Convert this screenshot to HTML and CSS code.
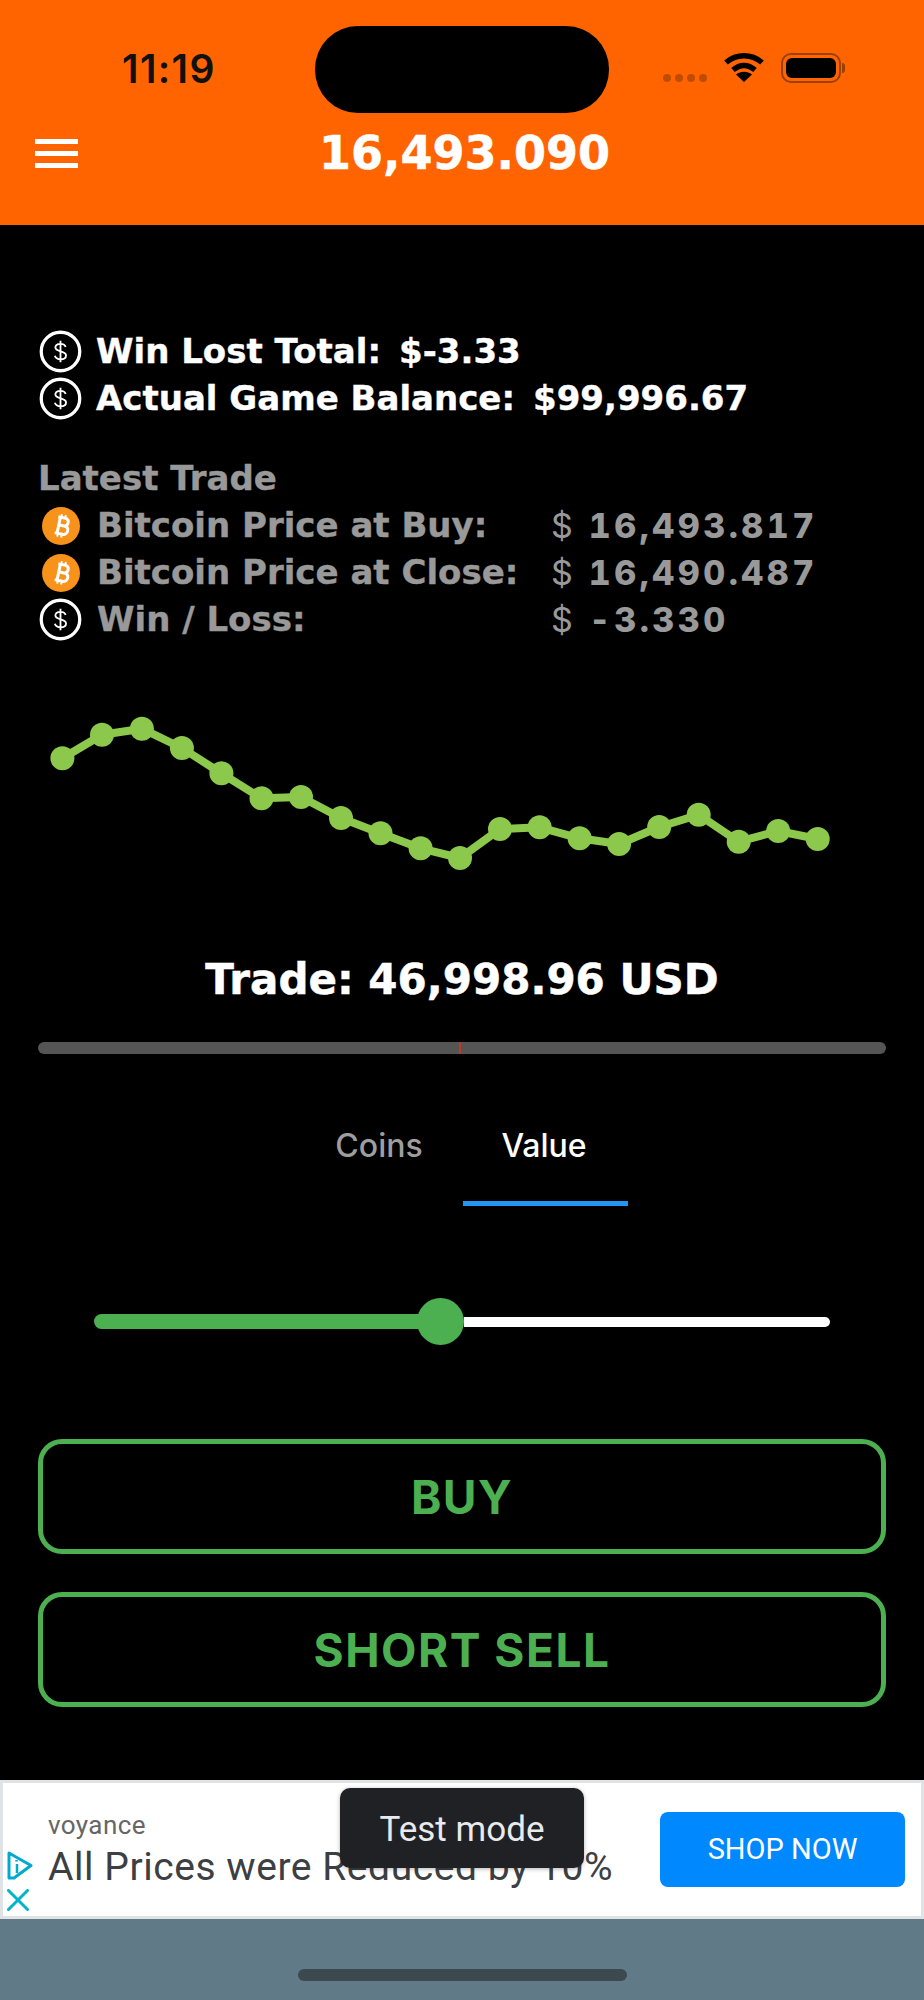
FILE: index.html
```html
<!DOCTYPE html>
<html lang="en">
<head>
<meta charset="utf-8">
<title>Trade</title>
<link rel="stylesheet" href="styles.css">
</head>
<body>
<svg class="defs" width="0" height="0" aria-hidden="true">
  <symbol id="usd" viewBox="0 0 42 42">
    <circle cx="21" cy="21" r="18.8" fill="none" stroke="#fff" stroke-width="3.200"/>
    <path d="M26 16.600c-.5-2-2.500-3.100-5-3.100-2.900 0-5 1.400-5 3.700 0 4.900 10.400 2.600 10.400 7.700 0 2.500-2.400 3.700-5.400 3.700-2.900 0-4.900-1.300-5.500-3.400M21 10.600v20.800" fill="none" stroke="#fff" stroke-width="1.800"/>
  </symbol>
  <symbol id="btc" viewBox="0 0 38 38">
    <circle cx="19" cy="19" r="19" fill="#f7931a"/>
    <g transform="rotate(12 19 19)" fill="none" stroke="#fff">
      <path d="M14.500 10.500h6.500c2.700 0 4.300 1.600 4.300 3.900 0 2.400-1.700 4-4.300 4h-5M15.800 18.400h6.200c2.900 0 4.600 1.700 4.600 4.100 0 2.500-1.800 4.300-4.700 4.300h-7.700M16.600 10.500v16.300" stroke-width="3"/>
      <path d="M17.500 7.300v3.200M21.500 7.300v3.200M17.500 26.800v3.400M21.500 26.800v3.400" stroke-width="2"/>
    </g>
  </symbol>
</svg>

<header class="app-bar">
  <div class="status">
    <span class="clock">11:19</span>
    <div class="island"></div>
    <div class="status-icons">
      <span class="signal"><i></i><i></i><i></i><i></i></span>
      <svg class="wifi" viewBox="0 0 40 30" width="40" height="30"><path d="M2 9.500C12.500.500 27.500.500 38 9.500M9 17c7-6 15-6 22 0" fill="none" stroke="#000" stroke-width="5.500"/><path d="M20 29l-8-7.500c4.700-3.600 11.300-3.600 16 0z" fill="#000"/></svg>
      <span class="battery"><span class="battery-fill"></span></span>
      <span class="battery-cap"></span>
    </div>
  </div>
  <div class="title-row">
    <button class="menu" aria-label="Menu"><i></i><i></i><i></i></button>
    <h1 class="price">16,493.090</h1>
  </div>
</header>

<main class="content">
  <section class="totals">
    <div class="row"><svg class="ic-usd"><use href="#usd"/></svg><span class="pair"><span>Win Lost Total:</span><span>$-3.33</span></span></div>
    <div class="row"><svg class="ic-usd"><use href="#usd"/></svg><span class="pair"><span>Actual Game Balance:</span><span>$99,996.67</span></span></div>
  </section>

  <section class="latest">
    <div class="latest-title">Latest Trade</div>
    <div class="row"><svg class="ic-btc"><use href="#btc"/></svg><span class="label">Bitcoin Price at Buy:</span><span class="value"><span class="cur">$</span>16,493.817</span></div>
    <div class="row"><svg class="ic-btc"><use href="#btc"/></svg><span class="label">Bitcoin Price at Close:</span><span class="value"><span class="cur">$</span>16,490.487</span></div>
    <div class="row"><svg class="ic-usd"><use href="#usd"/></svg><span class="label">Win / Loss:</span><span class="value"><span class="cur">$</span>-3.330</span></div>
  </section>

  <svg class="chart" viewBox="0 0 924 180" width="924" height="180">
    <g transform="translate(0 -700)">
      <polyline fill="none" stroke="#8cc84b" stroke-width="8" stroke-linejoin="round" points="62.400,758.300 102,734.700 141.900,728.700 181.900,748 221.400,773.300 261.500,798.300 301,797 341,818 380.500,833.300 420.600,848.300 460,858 500,829 539.600,827.300 579.600,838.300 619.100,844 659.200,827 698.700,814.700 738.700,841.700 778.200,831 817.700,839"/>
      <g fill="#8cc84b">
        <circle cx="62.400" cy="758.300" r="12"/><circle cx="102" cy="734.700" r="12"/><circle cx="141.900" cy="728.700" r="12"/><circle cx="181.900" cy="748" r="12"/><circle cx="221.400" cy="773.300" r="12"/><circle cx="261.500" cy="798.300" r="12"/><circle cx="301" cy="797" r="12"/><circle cx="341" cy="818" r="12"/><circle cx="380.500" cy="833.300" r="12"/><circle cx="420.600" cy="848.300" r="12"/><circle cx="460" cy="858" r="12"/><circle cx="500" cy="829" r="12"/><circle cx="539.600" cy="827.300" r="12"/><circle cx="579.600" cy="838.300" r="12"/><circle cx="619.100" cy="844" r="12"/><circle cx="659.200" cy="827" r="12"/><circle cx="698.700" cy="814.700" r="12"/><circle cx="738.700" cy="841.700" r="12"/><circle cx="778.200" cy="831" r="12"/><circle cx="817.700" cy="839" r="12"/>
      </g>
    </g>
  </svg>

  <div class="trade">Trade: 46,998.96 USD</div>
  <div class="meter"><span class="meter-mark"></span></div>

  <div class="tabs">
    <div class="tab">Coins</div>
    <div class="tab tab-active">Value</div>
  </div>

  <div class="slider">
    <span class="slider-fill"></span>
    <span class="slider-thumb"></span>
    <span class="slider-rest"></span>
  </div>

  <div class="actions">
    <button class="action">BUY</button>
    <button class="action">SHORT SELL</button>
  </div>
</main>

<aside class="ad">
  <div class="ad-marks">
    <svg viewBox="0 0 26 29" width="26" height="29"><path d="M2 2l22 12.500L7 27H2z" fill="none" stroke="#00a9cf" stroke-width="3" stroke-linejoin="round"/><path d="M10 13v9M9.500 9v1.500" stroke="#00a9cf" stroke-width="2.500" fill="none"/></svg>
    <svg viewBox="0 0 22 22" width="22" height="22"><path d="M1.500 1.500l19 19M20.500 1.500l-19 19" stroke="#00b4cc" stroke-width="3" fill="none" stroke-linecap="round"/></svg>
  </div>
  <div class="ad-copy">
    <div class="ad-brand">voyance</div>
    <div class="ad-headline">All Prices were Reduced by 10%</div>
  </div>
  <div class="ad-cta">SHOP NOW</div>
  <div class="test-mode">Test mode</div>
</aside>

<footer class="home-area"><span class="home-bar"></span></footer>
</body>
</html>
```

FILE: styles.css
```css
* { box-sizing: border-box; }
html, body { margin: 0; padding: 0; }
body {
  width: 924px;
  height: 2000px;
  background: #000;
  font-family: "Inter", "Liberation Sans", sans-serif;
  color: #fff;
  overflow: hidden;
}
.defs { position: absolute; }

.app-bar { height: 225px; background: #ff6400; }
.status { height: 113px; padding-top: 26px; display: flex; position: relative; }
.clock {
  position: absolute; left: 122px; top: 46px;
  font: 600 39px/46px "Inter", sans-serif; color: #111; letter-spacing: 1.4px;
}
.island { width: 294px; height: 87px; margin-left: 315px; background: #000; border-radius: 43px; }
.status-icons { display: flex; align-items: flex-end; margin-left: 54px; height: 61px; padding-bottom: 4px; }
.signal { display: flex; gap: 4px; margin-bottom: 1px; margin-right: 17px; }
.signal i { width: 8px; height: 8px; border-radius: 50%; background: #c04c00; }
.wifi { margin-bottom: 0; margin-right: 17px; }
.battery {
  width: 60px; height: 30px; border: 2px solid #9c4000; border-radius: 10px; padding: 3px;
  margin-bottom: 0;
}
.battery-fill { display: block; width: 100%; height: 100%; background: #000; border-radius: 6px; }
.battery-cap { width: 3px; height: 10px; background: #9c4000; border-radius: 0 3px 3px 0; margin: 0 0 10px 1px; }

.title-row { display: flex; height: 66px; align-items: center; position: relative; padding-top: 14px; }
.menu {
  width: 43px; height: 29px; margin: 0 0 0 35px; padding: 0; border: 0; background: none;
  display: flex; flex-direction: column; justify-content: space-between; flex: none;
}
.menu i { display: block; height: 5px; background: #fff; }
.price {
  margin: 0 0 0 241px; font: 700 46px/60px "DejaVu Sans", sans-serif; color: #fff;
  white-space: nowrap; -webkit-text-stroke: .5px #fff;
}

.content { padding: 103px 38px 0; height: 1555px; }
.row { display: flex; align-items: center; height: 47px; white-space: nowrap; }
.totals .row, .latest .row { font: 700 34px/47px "DejaVu Sans", sans-serif; -webkit-text-stroke: .4px; }
.totals .row { color: #fff; }
.pair { display: flex; gap: 18px; margin-left: 14px; }
.ic-usd { width: 43px; height: 43px; margin-left: 1px; flex: none; }
.ic-btc { width: 38px; height: 38px; margin-left: 4px; flex: none; }
.latest { margin-top: 33px; color: #999; }
.latest-title { font: 700 34px/47px "DejaVu Sans", sans-serif; -webkit-text-stroke: .4px; }
.latest .label { width: 454px; margin-left: 15px; flex: none; }
.latest .row .ic-btc + .label { margin-left: 17px; }
.latest .row .value {
  font: 800 34px/47px "Inter", sans-serif; letter-spacing: 3.500px; font-variant-numeric: tabular-nums;
  -webkit-text-stroke: 0;
}
.latest .row .cur { font-weight: 400; margin-right: 16px; letter-spacing: 0; }

.chart { display: block; margin: 57px 0 0 -38px; }
.trade {
  text-align: center; font: 700 42px/52px "DejaVu Sans", sans-serif; margin-top: 74px;
  -webkit-text-stroke: .5px #fff;
}
.meter { height: 12px; margin-top: 36px; border-radius: 6px; background: #555; position: relative; }
.meter-mark { position: absolute; left: 421px; top: 0; width: 2px; height: 12px; background: #c0392b; }

.tabs { display: flex; justify-content: center; margin: 35px 0 0 2px; }
.tab {
  width: 165px; height: 117px; padding: 37px 3px 0 0; text-align: center;
  font: 500 32px/40px "Inter", sans-serif; color: #9e9e9e;
}
.tab-active { color: #fff; border-bottom: 5px solid #2196f3; }

.slider { display: flex; align-items: center; height: 47px; margin: 92px 56px 0 56px; }
.slider-fill { width: 340px; height: 15px; margin-right: -17px; background: #4caf50; border-radius: 8px 0 0 8px; flex: none; }
.slider-thumb { width: 47px; height: 47px; border-radius: 50%; background: #4caf50; position: relative; flex: none; }
.slider-rest { flex: 1; height: 10px; background: #fff; border-radius: 0 5px 5px 0; }

.actions { display: flex; flex-direction: column; gap: 38px; margin-top: 94px; }
.action {
  height: 115px; border: 5px solid #4caf50; border-radius: 24px; background: none; color: #4caf50;
  font: 700 46px/1 "Inter", sans-serif; letter-spacing: 1.500px; padding: 0;
}

.ad {
  height: 139px; background: #fff; border: 3px solid #e0e3e5; display: flex; align-items: stretch;
  position: relative; color: #3c4043;
}
.ad-marks { width: 45px; padding: 68px 0 0 4px; display: flex; flex-direction: column; gap: 9px; flex: none; }
.ad-copy { width: 612px; padding-top: 27px; flex: none; }
.ad-brand { font: 400 26px/30px "Roboto", sans-serif; color: #666; letter-spacing: .4px; }
.ad-headline { font: 400 39px/48px "Roboto", sans-serif; white-space: nowrap; margin-top: 3px; letter-spacing: .55px; }
.ad-cta {
  width: 245px; height: 75px; margin-top: 29px; border-radius: 8px; background: #0088ff; color: #fff;
  font: 400 29px/75px "Roboto", sans-serif; text-align: center;
}
.test-mode {
  position: absolute; left: 337px; top: 5px; width: 244px; height: 80px; border-radius: 10px;
  background: #202124; color: #e8eaed; font: 400 35px/84px "Roboto", sans-serif; text-align: center;
  box-shadow: 0 1px 4px rgba(0,0,0,.3);
}

.home-area { height: 81px; background: #607b87; padding-top: 50px; display: flex; justify-content: center; align-items: flex-start; }
.home-bar { width: 329px; height: 12px; border-radius: 6px; background: #3c4a50; }
```
